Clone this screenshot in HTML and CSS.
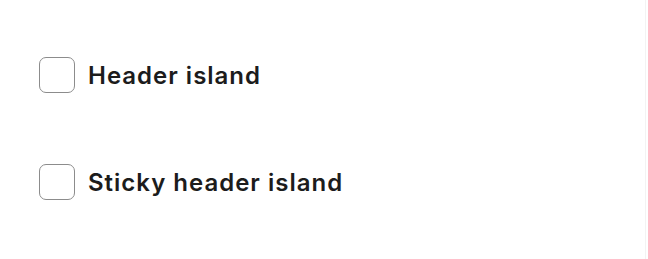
FILE: index.html
```html
<!DOCTYPE html>
<html>
<head>
<meta charset="utf-8">
<link rel="stylesheet" href="styles.css">
</head>
<body>
<div class="page">
  <div class="list">
    <label class="row"><span class="box"></span><span class="label">Header island</span></label>
    <label class="row"><span class="box"></span><span class="label">Sticky header island</span></label>
  </div>
</div>
</body>
</html>
```
FILE: styles.css
```css
html, body { margin: 0; padding: 0; background: #fff; }
body { width: 648px; height: 259px; overflow: hidden; }
.page {
  box-sizing: border-box;
  width: 646px;
  height: 259px;
  border-right: 1px solid #f3f3f3;
  padding: 57px 0 0 39px;
}
.list { display: flex; flex-direction: column; gap: 71px; }
.row { display: flex; align-items: center; gap: 13px; height: 36px; }
.box {
  box-sizing: border-box;
  width: 36px; height: 36px;
  border: 1px solid #8c8c8c;
  border-radius: 7px;
  flex: none;
}
.label {
  font-family: "Inter", "Lato", sans-serif;
  font-weight: 600;
  font-size: 24px;
  letter-spacing: 1px;
  color: #1c1c1c;
}
```
